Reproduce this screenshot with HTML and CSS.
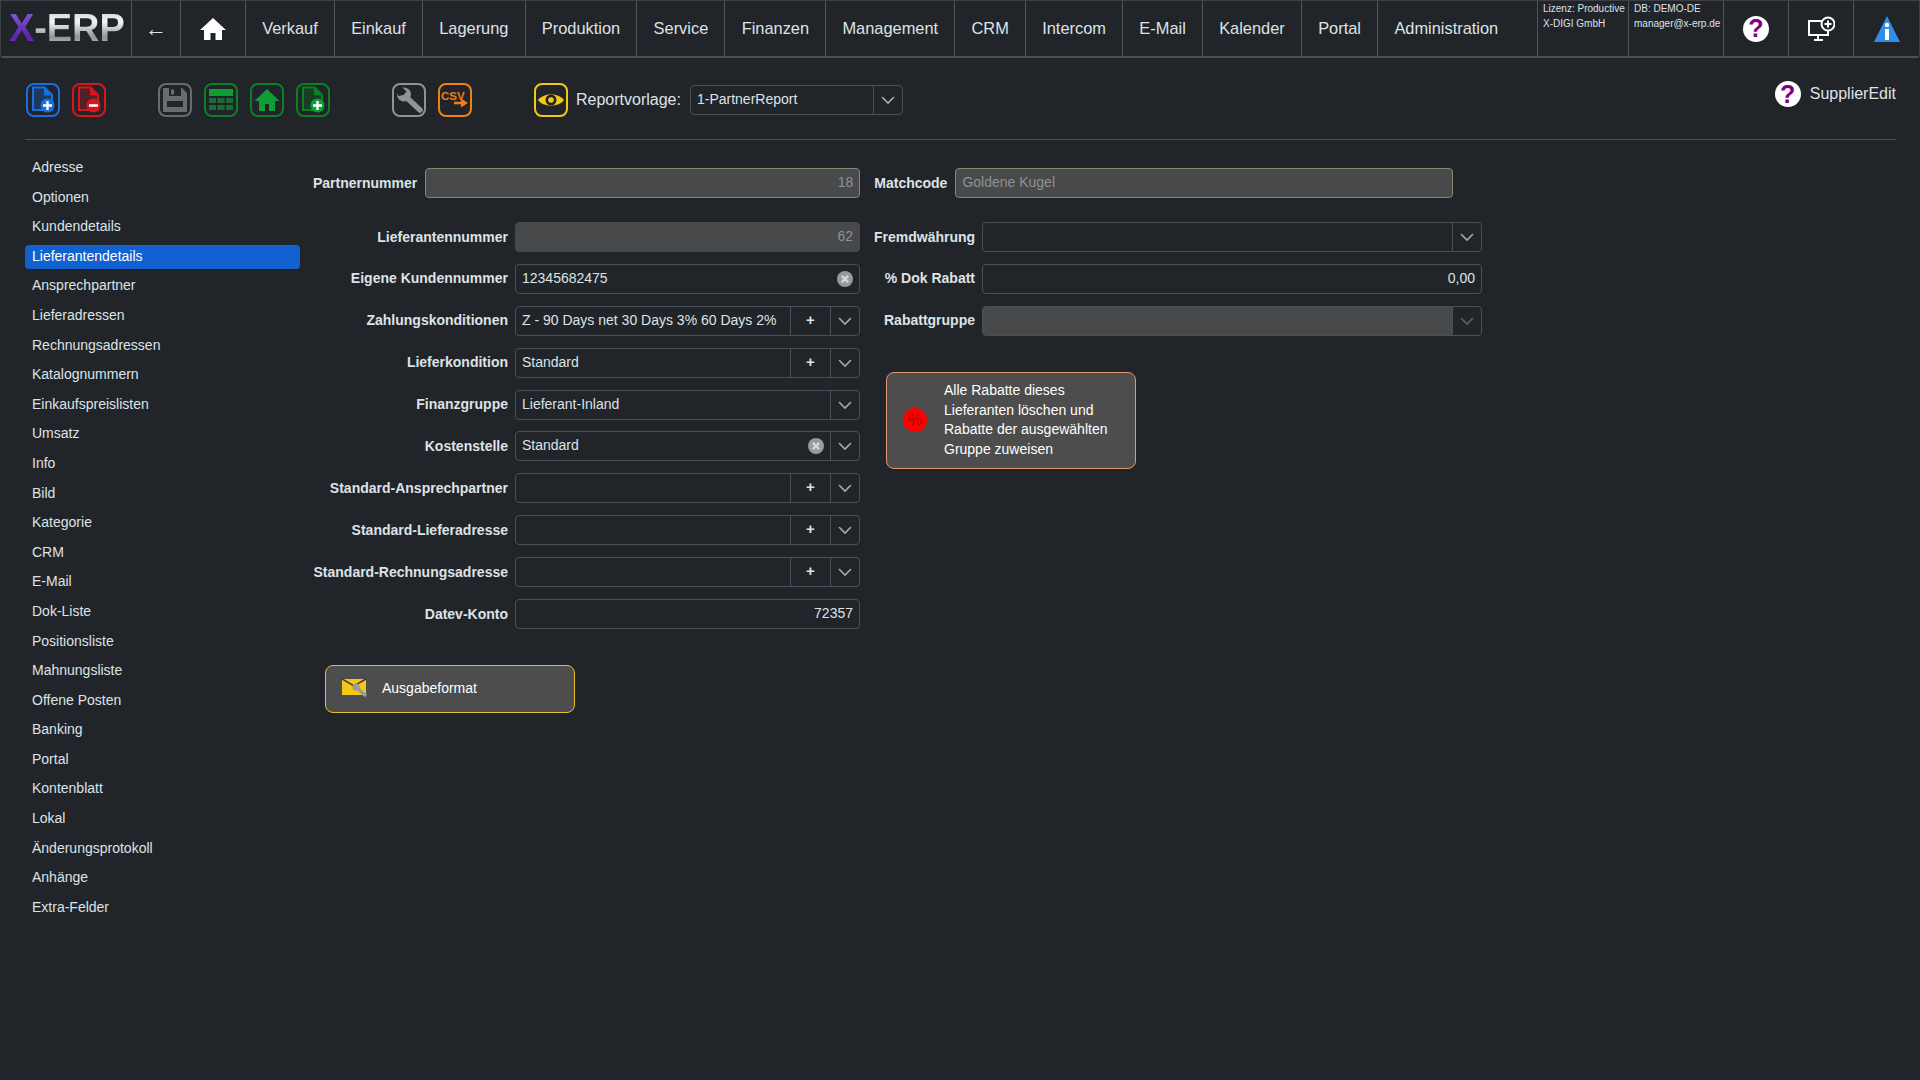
FILE: index.html
```html
<!DOCTYPE html>
<html lang="de">
<head>
    <meta charset="UTF-8">
    <title>X-ERP - SupplierEdit</title>
    <link rel="stylesheet" href="styles.css">
</head>
<body>
    <svg class="sprites" width="0" height="0">
        <symbol id="chev" viewBox="0 0 16 16"><path d="M2.500 5.500 8 11l5.500-5.500" fill="none" stroke="currentColor" stroke-width="1.600" stroke-linecap="round"/></symbol>
        <symbol id="clear" viewBox="0 0 16 16"><circle cx="8" cy="8" r="8" fill="#97999c"/><path d="M4.800 4.800l6.400 6.400M11.200 4.800l-6.400 6.400" stroke="#d5d6d7" stroke-width="2.400"/></symbol>
        <symbol id="home" viewBox="0 0 26 24"><path d="M13 1 0 13h4v10h6.500v-7h5v7H22V13h4z" fill="currentColor"/></symbol>
        <symbol id="doc" viewBox="0 0 30 30"><path d="M5 2.500h11.500L24 10v15H5z" fill="currentColor" fill-opacity=".28" stroke="currentColor" stroke-width="2"/><path d="M16 2 24.500 10.500H16z" fill="currentColor"/></symbol>
    </svg>

    <nav class="topnav">
        <div class="nav-cell logo"><span class="logo-x">X</span><span class="logo-erp">-ERP</span></div>
        <a class="nav-cell back">&#8592;</a>
        <a class="nav-cell home"><svg width="26" height="24"><use href="#home"/></svg></a>
        <a class="nav-cell">Verkauf</a>
        <a class="nav-cell">Einkauf</a>
        <a class="nav-cell">Lagerung</a>
        <a class="nav-cell">Produktion</a>
        <a class="nav-cell">Service</a>
        <a class="nav-cell">Finanzen</a>
        <a class="nav-cell">Management</a>
        <a class="nav-cell">CRM</a>
        <a class="nav-cell">Intercom</a>
        <a class="nav-cell">E-Mail</a>
        <a class="nav-cell">Kalender</a>
        <a class="nav-cell">Portal</a>
        <a class="nav-cell nav-last">Administration</a>
        <div class="nav-cell nav-info licence">Lizenz: Productive<br>X-DIGI GmbH</div>
        <div class="nav-cell nav-info user">DB: DEMO-DE<br>manager@x-erp.de</div>
        <a class="nav-cell nav-icon"><span class="help">?</span></a>
        <a class="nav-cell nav-icon">
            <svg width="28" height="26" viewBox="0 0 28 26" fill="none" stroke="#fff" stroke-width="2">
                <path d="M15 5H2v14h19v-5"/>
                <path d="M11 19v4M7 24h9"/>
                <circle cx="21" cy="8" r="6.500" fill="#212529"/>
                <path d="M21 4.500v7M17.500 8h7"/>
            </svg>
        </a>
        <a class="nav-cell nav-icon">
            <svg width="26" height="26" viewBox="0 0 26 26">
                <path d="M13 0 26 26H0z" fill="#2f8fe8"/>
                <circle cx="13" cy="9" r="2.200" fill="#fff"/>
                <rect x="11" y="13" width="4" height="11" fill="#fff"/>
            </svg>
        </a>
    </nav>

    <div class="toolbar">
        <div class="tool-group">
            <a class="tool tool-blue">
                <svg viewBox="0 0 30 30"><use href="#doc"/><circle cx="19.500" cy="20.500" r="7" fill="currentColor"/><path d="M19.500 16v9M15 20.500h9" stroke="#fff" stroke-width="2.400"/></svg>
            </a>
            <a class="tool tool-red">
                <svg viewBox="0 0 30 30"><use href="#doc"/><circle cx="19.500" cy="20.500" r="7" fill="currentColor"/><path d="M15 20.500h9" stroke="#fff" stroke-width="2.600"/></svg>
            </a>
        </div>
        <div class="tool-group group-save">
            <a class="tool tool-gray">
                <svg viewBox="0 0 30 30">
                    <path d="M3 3h19l5 5v19H3z" fill="currentColor"/>
                    <rect x="9" y="3" width="12" height="8" fill="#212529"/>
                    <rect x="11" y="4.500" width="3" height="5" fill="currentColor"/>
                    <rect x="7" y="16" width="16" height="6" fill="#212529"/>
                </svg>
            </a>
            <a class="tool tool-green">
                <svg viewBox="0 0 30 30">
                    <rect x="3" y="4" width="24" height="7" fill="#0f9d35"/>
                    <g fill="#1d6a35">
                        <rect x="3" y="13" width="7" height="5"/><rect x="11.500" y="13" width="7" height="5"/><rect x="20" y="13" width="7" height="5"/>
                        <rect x="3" y="20" width="7" height="5"/><rect x="11.500" y="20" width="7" height="5"/><rect x="20" y="20" width="7" height="5"/>
                    </g>
                </svg>
            </a>
            <a class="tool tool-green">
                <svg viewBox="0 0 30 30"><path d="M15 4 2.500 16H7v10h6v-7h4v7h6V16h4.500z" fill="#0f9d35"/></svg>
            </a>
            <a class="tool tool-green">
                <svg viewBox="0 0 30 30"><use href="#doc"/><circle cx="19.500" cy="20.500" r="7" fill="#0f9d35"/><path d="M19.500 16v9M15 20.500h9" stroke="#fff" stroke-width="2.400"/></svg>
            </a>
        </div>
        <div class="tool-group group-wide">
            <a class="tool tool-silver">
                <svg viewBox="0 0 30 30">
                    <path d="M12 12 26 25" stroke="currentColor" stroke-width="5.500" stroke-linecap="round"/>
                    <circle cx="10" cy="9.500" r="7" fill="currentColor"/>
                    <path d="M2 3.500 8 2l4.500 4.500-3 3.500L4 11z" fill="#212529"/>
                </svg>
            </a>
            <a class="tool tool-orange">
                <svg viewBox="0 0 30 30">
                    <text x="1" y="15" class="csv-text">CSV</text>
                    <path d="M14 18h8" stroke="currentColor" stroke-width="2.600"/>
                    <path d="M21 13.500l7 4.500-7 4.500z" fill="currentColor"/>
                </svg>
            </a>
        </div>
        <div class="tool-group group-wide">
            <a class="tool tool-yellow">
                <svg viewBox="0 0 30 30">
                    <path d="M2 15C7 7.500 23 7.500 28 15 23 22.500 7 22.500 2 15z" fill="currentColor"/>
                    <circle cx="15" cy="15" r="5.500" fill="#212529"/>
                    <circle cx="15" cy="15" r="2.800" fill="currentColor"/>
                </svg>
            </a>
        </div>
        <span class="report-label">Reportvorlage:</span>
        <div class="combo report-combo">
            <div class="combo-value">1-PartnerReport</div>
            <div class="combo-btn chev"><svg width="16" height="16"><use href="#chev"/></svg></div>
        </div>
        <div class="page-help"><span class="help">?</span>SupplierEdit</div>
    </div>

    <div class="content">
        <ul class="side-menu">
            <li>Adresse</li>
            <li>Optionen</li>
            <li>Kundendetails</li>
            <li class="active">Lieferantendetails</li>
            <li>Ansprechpartner</li>
            <li>Lieferadressen</li>
            <li>Rechnungsadressen</li>
            <li>Katalognummern</li>
            <li>Einkaufspreislisten</li>
            <li>Umsatz</li>
            <li>Info</li>
            <li>Bild</li>
            <li>Kategorie</li>
            <li>CRM</li>
            <li>E-Mail</li>
            <li>Dok-Liste</li>
            <li>Positionsliste</li>
            <li>Mahnungsliste</li>
            <li>Offene Posten</li>
            <li>Banking</li>
            <li>Portal</li>
            <li>Kontenblatt</li>
            <li>Lokal</li>
            <li>Änderungsprotokoll</li>
            <li>Anhänge</li>
            <li>Extra-Felder</li>
        </ul>

        <div class="form">
            <div class="form-head">
                <label class="field-label">Partnernummer</label>
                <div class="box head-box box-partner readonly num">18</div>
                <label class="field-label label-match">Matchcode</label>
                <div class="box head-box box-match readonly">Goldene Kugel</div>
            </div>

            <div class="form-cols">
                <div class="col-left">
                    <div class="fields fields-left">
                        <label class="field-label">Lieferantennummer</label>
                        <div class="box disabled num">62</div>

                        <label class="field-label">Eigene Kundennummer</label>
                        <div class="combo">
                            <div class="combo-value">12345682475</div>
                            <div class="clear-wrap"><svg width="16" height="16"><use href="#clear"/></svg></div>
                        </div>

                        <label class="field-label">Zahlungskonditionen</label>
                        <div class="combo">
                            <div class="combo-value">Z - 90 Days net 30 Days 3% 60 Days 2%</div>
                            <div class="combo-btn plus">+</div>
                            <div class="combo-btn chev"><svg width="16" height="16"><use href="#chev"/></svg></div>
                        </div>

                        <label class="field-label">Lieferkondition</label>
                        <div class="combo">
                            <div class="combo-value">Standard</div>
                            <div class="combo-btn plus">+</div>
                            <div class="combo-btn chev"><svg width="16" height="16"><use href="#chev"/></svg></div>
                        </div>

                        <label class="field-label">Finanzgruppe</label>
                        <div class="combo">
                            <div class="combo-value">Lieferant-Inland</div>
                            <div class="combo-btn chev"><svg width="16" height="16"><use href="#chev"/></svg></div>
                        </div>

                        <label class="field-label">Kostenstelle</label>
                        <div class="combo">
                            <div class="combo-value">Standard</div>
                            <div class="clear-wrap"><svg width="16" height="16"><use href="#clear"/></svg></div>
                            <div class="combo-btn chev"><svg width="16" height="16"><use href="#chev"/></svg></div>
                        </div>

                        <label class="field-label">Standard-Ansprechpartner</label>
                        <div class="combo">
                            <div class="combo-value"></div>
                            <div class="combo-btn plus">+</div>
                            <div class="combo-btn chev"><svg width="16" height="16"><use href="#chev"/></svg></div>
                        </div>

                        <label class="field-label">Standard-Lieferadresse</label>
                        <div class="combo">
                            <div class="combo-value"></div>
                            <div class="combo-btn plus">+</div>
                            <div class="combo-btn chev"><svg width="16" height="16"><use href="#chev"/></svg></div>
                        </div>

                        <label class="field-label">Standard-Rechnungsadresse</label>
                        <div class="combo">
                            <div class="combo-value"></div>
                            <div class="combo-btn plus">+</div>
                            <div class="combo-btn chev"><svg width="16" height="16"><use href="#chev"/></svg></div>
                        </div>

                        <label class="field-label">Datev-Konto</label>
                        <div class="box num">72357</div>
                    </div>

                    <a class="action action-mail">
                        <svg width="26" height="20" viewBox="0 0 26 20">
                            <rect y="1" width="24" height="16" fill="#f5c816"/>
                            <path d="M0 1l12 7 12-7" fill="none" stroke="#3a3a30" stroke-width="1.500"/>
                            <path d="M14 9l10 9" stroke="#9a9a9a" stroke-width="3.500"/>
                            <circle cx="14" cy="9" r="3.500" fill="#9a9a9a"/>
                        </svg>
                        <span>Ausgabeformat</span>
                    </a>
                </div>

                <div class="col-right">
                    <div class="fields fields-right">
                        <label class="field-label">Fremdwährung</label>
                        <div class="combo">
                            <div class="combo-value"></div>
                            <div class="combo-btn chev"><svg width="16" height="16"><use href="#chev"/></svg></div>
                        </div>

                        <label class="field-label">% Dok Rabatt</label>
                        <div class="box num">0,00</div>

                        <label class="field-label">Rabattgruppe</label>
                        <div class="combo combo-disabled">
                            <div class="combo-value"></div>
                            <div class="combo-btn chev"><svg width="16" height="16"><use href="#chev"/></svg></div>
                        </div>
                    </div>

                    <a class="action action-discount">
                        <span class="percent">%</span>
                        <span>Alle Rabatte dieses Lieferanten löschen und Rabatte der ausgewählten Gruppe zuweisen</span>
                    </a>
                </div>
            </div>
        </div>
    </div>
</body>
</html>
```

FILE: styles.css
```css
* {
    box-sizing: border-box;
}

html, body {
    margin: 0;
    padding: 0;
    height: 100%;
    overflow: hidden;
}

body {
    background-color: #212529;
    color: #dee2e6;
    font-family: "Liberation Sans", Arial, sans-serif;
    font-size: 14px;
}

.sprites {
    position: absolute;
}

/* top navigation */
.topnav {
    display: flex;
    height: 58px;
    border: 1px solid #3c4146;
    border-bottom: 2px solid #495057;
    border-radius: 0 0 4px 4px;
}

.nav-cell {
    display: flex;
    align-items: center;
    padding: 0 16.2px;
    border-right: 1px solid #4f555b;
    font-size: 16.4px;
    color: #dee2e6;
}

.nav-last {
    flex: 1;
}

.logo {
    width: 131px;
    padding: 0 0 0 8px;
    font-size: 38px;
    font-weight: bold;
    letter-spacing: -0.1px;
}

.logo-x {
    background: linear-gradient(to bottom, #8d63d8, #5a22a8 70%, #7a4cc8);
    -webkit-background-clip: text;
    background-clip: text;
    color: transparent;
}

.logo-erp {
    background: linear-gradient(to bottom, #c8ccd0, #f2f4f5 35%, #8e9499 70%, #d8dadc);
    -webkit-background-clip: text;
    background-clip: text;
    color: transparent;
}

.back {
    width: 49px;
    padding: 0;
    justify-content: center;
    font-size: 22px;
}

.home {
    width: 65px;
    padding: 0;
    justify-content: center;
    color: #fff;
}

.nav-info {
    align-items: flex-start;
    padding: 0 0 0 5px;
    font-size: 10px;
    line-height: 15px;
}

.licence {
    width: 91px;
}

.user {
    width: 95px;
}

.nav-icon {
    width: 65px;
    padding: 0;
    justify-content: center;
}

.nav-icon:last-child {
    border-right: 0;
}

.help {
    display: flex;
    align-items: center;
    justify-content: center;
    flex-shrink: 0;
    width: 26px;
    height: 26px;
    border-radius: 50%;
    background: #fff;
    color: #800080;
    font-size: 25px;
    font-weight: bold;
}

/* toolbar */
.toolbar {
    display: flex;
    align-items: flex-start;
    height: 82px;
    margin: 0 24px 0 25px;
    padding: 23px 0 0 1px;
    border-bottom: 1px solid #495057;
}

.tool-group {
    display: flex;
    gap: 12px;
    margin-top: 2px;
}

.group-save {
    margin-left: 52px;
}

.group-wide {
    margin-left: 62px;
}

.tool {
    display: block;
    width: 34px;
    height: 34px;
    padding: 0;
    border: 2px solid currentColor;
    border-radius: 8px;
}

.tool svg {
    display: block;
    width: 30px;
    height: 30px;
}

.tool-blue { color: #1a6fe0; }
.tool-red { color: #d8161c; }
.tool-gray { color: #696b6d; }
.tool-green { color: #0c7f24; }
.tool-silver { color: #909396; }
.tool-orange { color: #f07f14; }
.tool-yellow { color: #f5c816; }

.csv-text {
    font-size: 11.5px;
    font-weight: bold;
    fill: currentColor;
}

.report-label {
    margin: 6px 9px 0 8px;
    font-size: 16px;
    line-height: 26px;
}

.report-combo {
    width: 213px;
    height: 30px;
    margin-top: 4px;
}

.page-help {
    display: flex;
    align-items: center;
    gap: 9px;
    margin-left: auto;
    font-size: 16px;
}

/* sidebar */
.content {
    display: flex;
}

.side-menu {
    display: flex;
    flex-direction: column;
    gap: 5.6px;
    width: 275px;
    margin: 16px 0 0 25px;
    padding: 0;
    list-style: none;
}

.side-menu li {
    height: 24px;
    padding: 0 7px;
    border-radius: 4px;
    line-height: 23px;
}

.side-menu .active {
    background-color: #1261d1;
    color: #fff;
}

/* form */
.form {
    margin: 28px 0 0 13px;
}

.form-head {
    display: flex;
    align-items: center;
    gap: 8px;
}

.head-box {
    height: 28px;
}

.box-partner {
    width: 435px;
}

.box-match {
    width: 498px;
}

.label-match {
    margin-left: 6px;
}

.field-label {
    padding-bottom: 1px;
    font-weight: bold;
    text-align: right;
    white-space: nowrap;
}

.form-cols {
    display: flex;
    gap: 14px;
    margin-top: 24px;
}

.fields {
    display: grid;
    align-items: center;
    grid-auto-rows: 30px;
    row-gap: 11.9px;
}

.fields-left {
    grid-template-columns: 195px 345px;
    column-gap: 7px;
}

.fields-right {
    grid-template-columns: 101px 500px;
    column-gap: 7px;
}

.box,
.combo {
    height: 30px;
    border: 1px solid #495057;
    border-radius: 4px;
}

.box {
    padding: 0 6px;
    line-height: 26px;
}

.num {
    text-align: right;
}

.readonly {
    background-color: #48494b;
    border-color: #85876f;
    color: #8f9295;
}

.disabled {
    background-color: #48494b;
    border-color: #48494b;
    color: #8f9295;
}

.combo {
    display: flex;
}

.combo-value {
    flex: 1;
    padding-left: 6px;
    line-height: 26px;
    white-space: nowrap;
    overflow: hidden;
}

.combo-btn {
    display: flex;
    align-items: center;
    justify-content: center;
    border-left: 1px solid #495057;
    color: #a4abb2;
}

.combo-btn.plus {
    width: 40px;
    padding-bottom: 3px;
    color: #dee2e6;
    font-size: 15px;
    font-weight: bold;
}

.combo-btn.chev {
    width: 29px;
    flex-shrink: 0;
}

.combo-disabled .combo-value {
    background-color: #48494b;
}

.combo-disabled .combo-btn {
    color: #5d6166;
}

.clear-wrap {
    display: flex;
    align-items: center;
    padding-right: 6px;
}

.action {
    display: flex;
    align-items: center;
    background-color: #4d4d4d;
    color: #fff;
    border-radius: 8px;
}

.action-mail {
    gap: 14px;
    width: 250px;
    height: 48px;
    margin: 36px 0 0 12px;
    padding-left: 16px;
    padding-bottom: 2px;
    border: 1px solid #e2c228;
}

.action-discount {
    gap: 17px;
    width: 250px;
    height: 97px;
    margin: 36px 0 0 12px;
    padding: 0 20px 0 16px;
    border: 1px solid #e2966c;
    line-height: 19.6px;
}

.percent {
    flex-shrink: 0;
    display: flex;
    align-items: center;
    justify-content: center;
    width: 24px;
    height: 24px;
    border-radius: 50%;
    background: #ff0000;
    color: #b80000;
    font-size: 16px;
}
```
